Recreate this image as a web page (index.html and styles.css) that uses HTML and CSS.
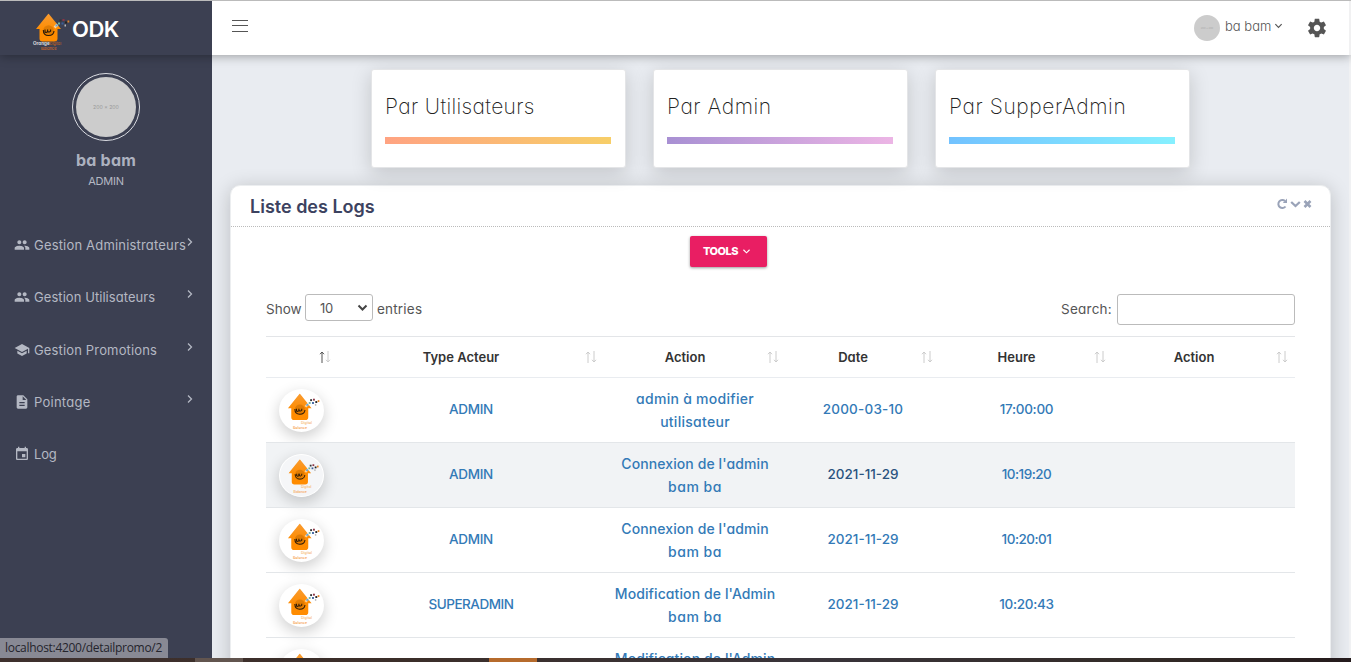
FILE: index.html
```html
<!DOCTYPE html>
<html lang="fr">
<head>
<meta charset="utf-8">
<title>ODK</title>
<link rel="stylesheet" href="styles.css">
</head>
<body>
<svg class="defs" width="0" height="0">
  <defs>
    <linearGradient id="orange" x1="0" y1="0" x2="0" y2="1"><stop offset="0" stop-color="#f89c33"/><stop offset=".6" stop-color="#ff8c00"/></linearGradient>
    <symbol id="house" viewBox="0 0 36 37">
      <path d="M15 0 27.500 15.500H24V25q0 3-3 3H9q-3 0-3-3V15.500H2.500z" fill="url(#orange)"/>
      <circle cx="15" cy="17" r="5.300" fill="#a85c00" opacity=".35"/>
      <path d="M9.800 16.500q0 5.500 5.200 5.500t5.500-4.500M11.500 16v2.500q1.700 1 2.600-.5V16v2q1.700 1.200 3-.3V16" fill="none" stroke="#2b1a08" stroke-width="1.100"/>
      <path d="M21 14l3-3" stroke="#fff" stroke-width="2.500" opacity=".6"/>
      <g><rect x="22" y="11" width="2" height="2" fill="#58a6dd"/><rect x="24.500" y="9" width="2" height="2" fill="#6eb4a0"/><rect x="26" y="6" width="2" height="2" fill="#333"/><rect x="29" y="5.500" width="2" height="2" fill="#8b3545"/><rect x="31.500" y="8" width="2" height="2" fill="#222"/><rect x="34" y="7" width="2" height="2" fill="#e88324"/><rect x="28" y="9" width="2" height="2" fill="#385f9d"/><rect x="31" y="11" width="1.500" height="2" fill="#bbb"/></g>
    </symbol>
    <symbol id="people" viewBox="0 0 24 24"><path d="M16 11c1.660 0 2.990-1.340 2.990-3S17.660 5 16 5s-3 1.340-3 3 1.340 3 3 3zm-8 0c1.660 0 2.990-1.340 2.990-3S9.660 5 8 5 5 6.340 5 8s1.340 3 3 3zm0 2c-2.330 0-7 1.170-7 3.500V19h14v-2.500c0-2.330-4.670-3.500-7-3.500zm8 0c-.29 0-.62.020-.97.050 1.160.84 1.970 1.970 1.970 3.450V19h6v-2.500c0-2.330-4.670-3.500-7-3.500z"/></symbol>
    <symbol id="school" viewBox="0 0 24 24"><path d="M5 13.180v4L12 21l7-3.820v-4L12 17l-7-3.820zM12 3 1 9l11 6 9-4.910V17h2V9L12 3z"/></symbol>
    <symbol id="file" viewBox="0 0 24 24"><path d="M14 2H6c-1.100 0-2 .9-2 2v16c0 1.100.9 2 2 2h12c1.100 0 2-.9 2-2V8l-6-6zm2 16H8v-2h8v2zm0-4H8v-2h8v2zm-3-5V3.500L18.500 9H13z"/></symbol>
    <symbol id="event" viewBox="0 0 24 24"><path d="M17 12h-5v5h5v-5zM16 1v2H8V1H6v2H5c-1.110 0-2 .9-2 2v14c0 1.100.89 2 2 2h14c1.100 0 2-.9 2-2V5c0-1.100-.9-2-2-2h-1V1h-2zm3 18H5V8h14v11z"/></symbol>
    <symbol id="chev" viewBox="0 0 8 10"><path d="M2 1.500 5.500 5 2 8.500" fill="none" stroke="currentColor" stroke-width="1.300"/></symbol>
    <symbol id="down" viewBox="0 0 10 8"><path d="M1.500 2 5 5.500 8.500 2" fill="none" stroke="currentColor" stroke-width="1.300"/></symbol>
    <symbol id="badge" viewBox="0 0 45 43"><use href="#house" x="6.600" y="4.500" width="34" height="35"/><text x="22" y="35" font-size="3.600" fill="#f6b468">Digital</text><text x="14" y="39.500" font-size="3.600" fill="#f6a04a">Balance</text></symbol>
  </defs>
</svg>
<div class="app">
  <header class="topbar">
    <div class="brand">
      <svg class="logo" width="40" height="40" viewBox="0 0 40 40"><use href="#house" x=".5" y="3.500" width="36" height="37"/><text x="0" y="35" font-size="4.600" font-weight="700" fill="#ddd">Orange<tspan fill="#d0661c" font-weight="400" font-size="3.800">Digital</tspan></text><text x="8" y="40" font-size="4" fill="#e0701d">Balance</text></svg>
      <span class="brand-name">ODK</span>
    </div>
    <div class="bar">
      <svg class="burger" width="16" height="14" viewBox="0 0 16 14"><path d="M0 1.500h16M0 6.500h16M0 12.500h16" stroke="#555"/></svg>
      <div class="user">
        <span class="mini">200 x 200</span>
        <span class="uname">ba bam</span>
        <svg class="caret" width="9" height="8"><use href="#down"/></svg>
        <svg class="gear" width="22" height="22" viewBox="0 0 24 24"><path fill="#555" d="M19.430 12.980c.04-.32.07-.64.07-.98s-.03-.66-.07-.98l2.110-1.650c.19-.15.240-.42.120-.64l-2-3.460c-.12-.22-.39-.3-.61-.22l-2.490 1c-.52-.4-1.080-.73-1.690-.98l-.38-2.650C14.460 2.180 14.250 2 14 2h-4c-.25 0-.46.18-.49.42l-.38 2.650c-.61.250-1.170.59-1.690.98l-2.490-1c-.23-.09-.49 0-.61.22l-2 3.460c-.13.22-.07.49.120.64l2.110 1.650c-.04.32-.07.65-.07.98s.03.66.070.98l-2.110 1.650c-.19.150-.240.420-.120.640l2 3.460c.12.22.39.3.61.22l2.490-1c.52.4 1.080.73 1.690.98l.38 2.650c.03.240.240.420.490.420h4c.25 0 .46-.18.49-.42l.38-2.650c.61-.25 1.170-.59 1.690-.98l2.490 1c.23.090.490 0 .61-.22l2-3.460c.12-.22.070-.49-.12-.64l-2.110-1.650zM12 15.500c-1.930 0-3.500-1.570-3.500-3.500s1.570-3.500 3.500-3.500 3.500 1.570 3.500 3.500-1.570 3.500-3.500 3.500z"/></svg>
      </div>
    </div>
  </header>
  <div class="main">
    <aside class="side">
      <div class="avatar"><span>200 x 200</span></div>
      <div class="name">ba bam</div>
      <div class="role">ADMIN</div>
      <nav class="menu">
        <a class="item"><svg class="mi" width="16" height="16"><use href="#people"/></svg><span class="m1">Gestion Administrateurs</span><svg class="mc" width="8" height="10"><use href="#chev"/></svg></a>
        <a class="item"><svg class="mi" width="16" height="16"><use href="#people"/></svg><span class="m2">Gestion Utilisateurs</span><svg class="mc" width="8" height="10"><use href="#chev"/></svg></a>
        <a class="item"><svg class="mi" width="16" height="16"><use href="#school"/></svg><span class="m3">Gestion Promotions</span><svg class="mc" width="8" height="10"><use href="#chev"/></svg></a>
        <a class="item"><svg class="mi" width="16" height="16"><use href="#file"/></svg><span class="m4">Pointage</span><svg class="mc" width="8" height="10"><use href="#chev"/></svg></a>
        <a class="item"><svg class="mi" width="16" height="16"><use href="#event"/></svg><span class="m5">Log</span></a>
      </nav>
    </aside>
    <main class="content">
      <section class="cards">
        <div class="card"><h3 class="h-users">Par Utilisateurs</h3><div class="line warm"></div></div>
        <div class="card"><h3 class="h-admin">Par Admin</h3><div class="line violet"></div></div>
        <div class="card"><h3 class="h-super">Par SupperAdmin</h3><div class="line blue"></div></div>
      </section>
      <section class="panel">
        <div class="panel-head"><h2>Liste des Logs</h2>
          <svg class="ctl" width="36" height="12" viewBox="0 0 36 12" fill="none" stroke="#9aa3b8" stroke-width="2"><path d="M8.500 8.500A4 4 0 1 1 8 3"/><path d="M10 .5V5H5.800z" fill="#9aa3b8" stroke="none"/><path d="M14.200 4 18.500 8l4.300-4" stroke-width="2.300"/><path d="m27.500 3 6 6m0-6-6 6" stroke-width="2.600"/></svg>
        </div>
        <div class="tools"><button class="btn">TOOLS<svg width="9" height="7"><use href="#down"/></svg></button></div>
        <div class="filters">
          <span class="show">Show</span>
          <span class="select">10<svg width="11" height="8" viewBox="0 0 11 8"><path d="m1.500 1.500 4 4 4-4" fill="none" stroke="#444" stroke-width="2"/></svg></span>
          <span class="entries">entries</span>
          <label class="search"><span>Search:</span><input type="text"></label>
        </div>
        <table class="logs">
          <colgroup><col class="c1"><col class="c2"><col class="c3"><col class="c4"><col class="c5"><col class="c6"></colgroup>
          <thead><tr>
            <th><div class="th"><span></span><svg class="sort" width="12" height="12"><path class="asc" d="M3 12V1M1 3.200 3 1l2 2.200"/><path d="M9 0v11M7 8.800 9 11l2-2.200"/></svg></div></th>
            <th><div class="th"><span>Type Acteur</span><svg class="sort" width="12" height="12"><path d="M3 12V1M1 3.200 3 1l2 2.200M9 0v11M7 8.800 9 11l2-2.200"/></svg></div></th>
            <th><div class="th"><span>Action</span><svg class="sort" width="12" height="12"><path d="M3 12V1M1 3.200 3 1l2 2.200M9 0v11M7 8.800 9 11l2-2.200"/></svg></div></th>
            <th><div class="th"><span>Date</span><svg class="sort" width="12" height="12"><path d="M3 12V1M1 3.200 3 1l2 2.200M9 0v11M7 8.800 9 11l2-2.200"/></svg></div></th>
            <th><div class="th"><span>Heure</span><svg class="sort" width="12" height="12"><path d="M3 12V1M1 3.200 3 1l2 2.200M9 0v11M7 8.800 9 11l2-2.200"/></svg></div></th>
            <th><div class="th"><span>Action</span><svg class="sort" width="12" height="12"><path d="M3 12V1M1 3.200 3 1l2 2.200M9 0v11M7 8.800 9 11l2-2.200"/></svg></div></th>
          </tr></thead>
          <tbody>
            <tr><td><svg class="pic" width="45" height="43"><use href="#badge"/></svg></td><td class="actor">ADMIN</td><td class="act wide">admin à modifier<br>utilisateur</td><td class="date early">2000-03-10</td><td class="time">17:00:00</td><td></td></tr>
            <tr class="hover"><td><svg class="pic" width="45" height="43"><use href="#badge"/></svg></td><td class="actor">ADMIN</td><td class="act">Connexion de l'admin<br><span class="who">bam ba</span></td><td class="date active">2021-11-29</td><td class="time tight">10:19:20</td><td></td></tr>
            <tr><td><svg class="pic" width="45" height="43"><use href="#badge"/></svg></td><td class="actor">ADMIN</td><td class="act">Connexion de l'admin<br><span class="who">bam ba</span></td><td class="date">2021-11-29</td><td class="time tight">10:20:01</td><td></td></tr>
            <tr><td><svg class="pic" width="45" height="43"><use href="#badge"/></svg></td><td class="actor super">SUPERADMIN</td><td class="act">Modification de l'Admin<br><span class="who">bam ba</span></td><td class="date">2021-11-29</td><td class="time">10:20:43</td><td></td></tr>
            <tr><td><svg class="pic" width="45" height="43"><use href="#badge"/></svg></td><td></td><td class="act">Modification de l'Admin<br><span class="who">bam ba</span></td><td></td><td></td><td></td></tr>
          </tbody>
        </table>
      </section>
    </main>
  </div>
  <div class="status">localhost:4200/detailpromo/2</div>
  <footer class="taskbar"><i class="t1"></i><i class="t2"></i></footer>
</div>
</body>
</html>
```
FILE: styles.css
```css
* { box-sizing: border-box; }
body { margin: 0; font-family: Inter, "Open Sans", sans-serif; font-feature-settings: "cv11"; font-size: 13px; color: #555; overflow: hidden; }
.defs { position: absolute; }
h2, h3 { margin: 0; }
.app { position: relative; width: 1351px; height: 662px; display: flex; flex-direction: column; overflow: hidden; background: #e9ecf1; }
.topbar { position: relative; z-index: 2; display: flex; flex: none; height: 55px; border-top: 1px solid #bbb; background: #fff; box-shadow: 0 1px 10px rgba(0,0,0,.35); }
.brand { width: 212px; display: flex; align-items: center; padding: 3px 0 0 33px; background: #3c4052; color: #fff; }
.logo { overflow: visible; }
.brand-name { font-size: 22px; font-weight: 600; letter-spacing: -.5px; margin: -2px 0 0 -1px; }
.bar { flex: 1; display: flex; justify-content: space-between; padding-left: 20px; border-right: 2px solid #f1f1f2; }
.burger { margin-top: 18px; }
.user { display: flex; align-items: center; padding-right: 21px; }
.mini { width: 26px; height: 26px; border-radius: 50%; background: #ccc; color: #aaa; font-size: 2.500px; display: grid; place-items: center; }
.uname { margin: -5px 3px 0 5px; width: 46px; font-size: 13px; font-weight: 300; white-space: nowrap; }
.caret { margin: -4px 23px 0 0; }
.main { flex: 1; display: flex; min-height: 0; }
.side { width: 212px; flex: none; background: #3c4052; color: #b4b8c3; padding-top: 18px; display: flex; flex-direction: column; align-items: center; }
.avatar { width: 68px; height: 68px; padding: 3px; border: 1px solid #d9dbe1; border-radius: 50%; }
.avatar span { display: grid; place-items: center; height: 60px; border-radius: 50%; background: #ccc; color: #999; font-size: 5.200px; }
.name { font-size: 16px; line-height: 20px; font-weight: 700; letter-spacing: .2px; margin-top: 9px; color: #acb1bf; }
.role { font-size: 11px; line-height: 14px; margin-top: 4px; letter-spacing: -.2px; }
.menu { width: 100%; margin-top: 31px; }
.item { display: flex; align-items: center; height: 52.250px; padding: 0 18px 0 13.500px; white-space: nowrap; }
.item span { margin-left: 4.500px; }
.mi { fill: #b4b8c3; flex: none; }
.mc { margin: -6px 0 0 auto; flex: none; }
.m1 { letter-spacing: .18px; }
.m2 { letter-spacing: .06px; }
.m3 { letter-spacing: .15px; }
.m4 { letter-spacing: .25px; }
.m5 { letter-spacing: -.2px; }
.content { flex: 1; min-width: 0; padding: 14px 18px 0 18px; border-right: 2px solid #f0f1f3; }
.cards { display: flex; gap: 27px; padding-left: 141px; }
.card { flex: none; width: 255px; height: 99px; padding: 21px 14px 0 13px; background: #fff; border: 1px solid #e4e5e7; border-radius: 3px; box-shadow: 0 5px 20px rgba(0,0,0,.17); }
.card h3 { font-size: 21px; line-height: 31px; font-weight: 250; color: #222; white-space: nowrap; }
.h-users { letter-spacing: .35px; }
.h-admin { letter-spacing: .55px; }
.h-super { letter-spacing: .6px; }
.line { width: 226px; height: 7px; margin: 15px 0 0; }
.warm { background: linear-gradient(90deg, #ffa382, #f7ce68); }
.violet { background: linear-gradient(90deg, #a890d3, #ecb5e5); }
.blue { background: linear-gradient(90deg, #72c2ff, #86f0ff); }
.panel { width: 1101px; height: 640px; margin-top: 17px; border: 1px solid #eceef0; border-radius: 10px; background: #fff; box-shadow: 0 3px 20px rgba(0,0,0,.2); }
.panel-head { height: 41px; display: flex; justify-content: space-between; padding: 0 17px 0 19px; border-bottom: 1px dotted #bbb; }
h2 { font-size: 18px; line-height: 42px; font-weight: 600; color: #3c4260; }
.ctl { margin-top: 12px; }
.tools { display: flex; padding: 9px 0 0 459px; }
.btn { width: 77px; height: 31px; display: flex; justify-content: center; align-items: center; gap: 4px; padding: 0 3px 1px 0; border: 0; border-radius: 2px; background: #e91e63; color: #fff; font: 800 11px Inter, sans-serif; letter-spacing: -.5px; box-shadow: 0 1px 3px rgba(0,0,0,.4); }
.filters { display: flex; height: 31px; margin: 27px 35px 0; align-items: center; }
.show { width: 39px; font-size: 13.500px; margin-top: -2px; }
.select { width: 68px; height: 27px; margin-top: -4px; display: flex; align-items: center; justify-content: space-between; padding: 1px 4px 0 14px; border: 1px solid #bbb; border-radius: 3px; letter-spacing: -.3px; }
.entries { margin: -2px 0 0 4px; font-size: 13.500px; letter-spacing: .2px; }
.search { margin-left: auto; display: flex; align-items: center; gap: 5px; font-size: 13.500px; letter-spacing: .25px; }
.search span { margin-top: -2px; }
.search input { width: 178px; height: 31px; border: 1px solid #bbb; border-radius: 3px; padding: 0; background: #fff; }
.logs { width: 1029px; margin: 11px 0 0 35px; table-layout: fixed; border-collapse: collapse; text-align: center; }
.c1 { width: 72px; } .c2 { width: 266px; } .c3 { width: 182px; } .c4 { width: 154px; } .c5 { width: 173px; } .c6 { width: 182px; }
.logs th { height: 41px; padding: 0 0 1px; border-top: 1px solid #e3e5e8; border-bottom: 1px solid #e9ecf0; font-size: 13px; font-weight: 600; color: #333; }
.th { display: flex; align-items: center; padding: 0 7px 0 10px; }
.th span { flex: 1; padding-right: 11px; }
.sort { fill: none; stroke: #ccc; stroke-width: 1; }
.asc { stroke: #555; }
.logs td { height: 65px; padding: 0 0 1px; border-bottom: 1px solid #e3e6e9; color: #337ab7; font-size: 13.500px; line-height: 23px; font-weight: 500; }
.logs .act { letter-spacing: .1px; font-size: 14px; }
.logs .wide { letter-spacing: .28px; }
.who { letter-spacing: .5px; }
.actor { letter-spacing: -.3px; }
.super { letter-spacing: -.5px; }
.early { letter-spacing: .2px; }
.time { letter-spacing: -.3px; }
.tight { letter-spacing: -.5px; }
.hover { background: #f1f3f5; }
.logs .active { color: #2b5380; }
.pic { display: block; margin: 1px 0 0 13px; border-radius: 50%; background: #fff; box-shadow: 0 5px 15px rgba(0,0,0,.2); }
.hover .pic { background: #f5f6f8; border: 1px solid #fff; }
.status { position: absolute; z-index: 3; left: 0; top: 638px; width: 168px; height: 20px; padding-left: 5px; border-radius: 0 3px 0 0; background: #888994; color: #24242c; font: 12px/20px "Open Sans", sans-serif; letter-spacing: -.3px; white-space: nowrap; }
.taskbar { position: relative; z-index: 4; flex: none; height: 4px; display: flex; background: linear-gradient(90deg, #3e302d, #3b2e29 30%, #39343a 60%, #332b27 85%, #241a1c); }
.t1 { width: 48px; margin-left: 195px; background: #62554f; }
.t2 { width: 48px; margin-left: 246px; background: #b66b2c; }
```
